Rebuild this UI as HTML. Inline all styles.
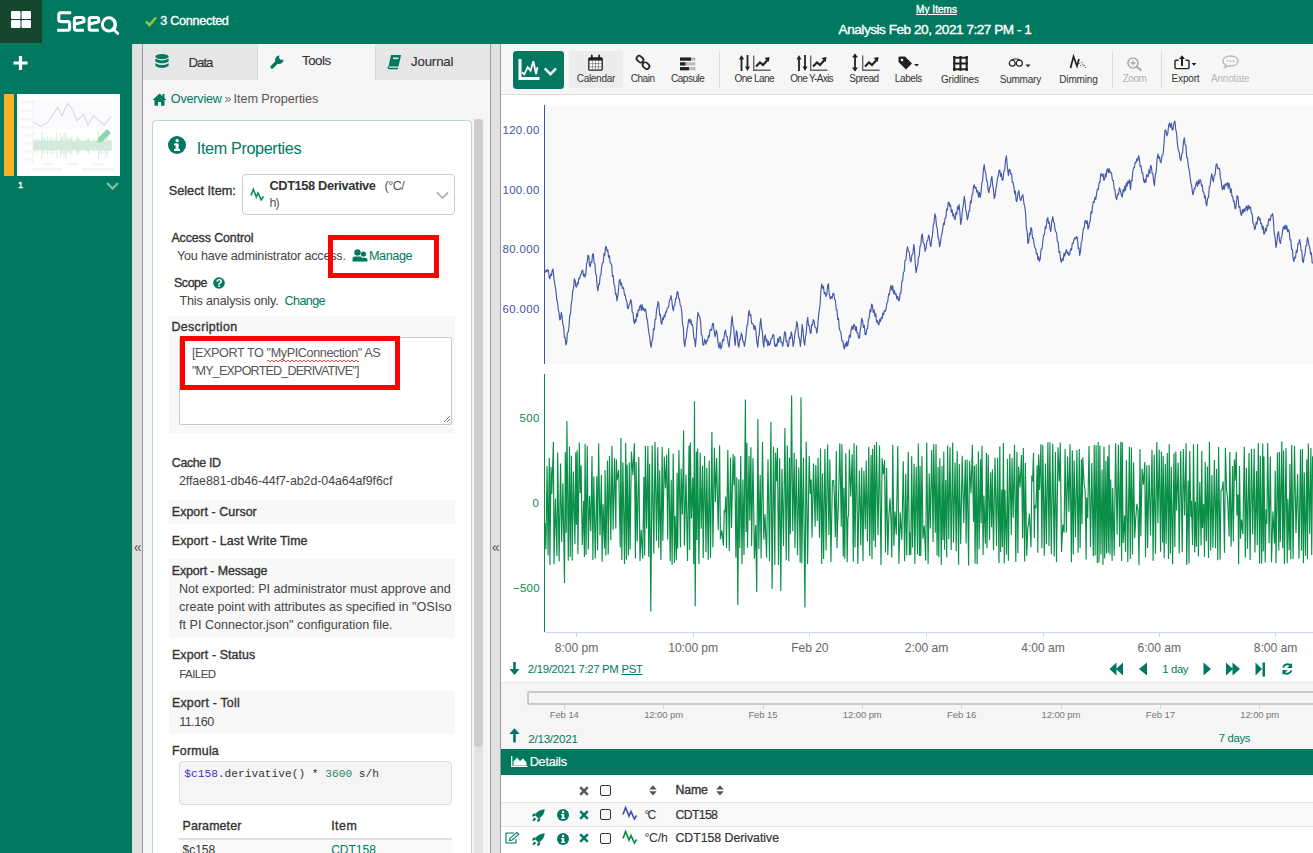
<!DOCTYPE html>
<html><head><meta charset="utf-8"><title>Seeq</title>
<style>
html,body{margin:0;padding:0;}
body{width:1313px;height:853px;overflow:hidden;position:relative;font-family:"Liberation Sans", sans-serif;background:#fff;}
svg{display:block;overflow:visible;}
</style></head><body>
<div style="position:absolute;left:0px;top:0px;width:1313px;height:44px;background:#007960;"></div>
<div style="position:absolute;left:0px;top:0px;width:42px;height:43px;background:#15472f;"></div>
<svg style="position:absolute;left:11px;top:11px;" width="21" height="18" viewBox="0 0 21 18"><rect x="0" y="0" width="9.5" height="8" rx="1" fill="#fff"/><rect x="10.5" y="0" width="9.5" height="8" rx="1" fill="#fff"/><rect x="0" y="9" width="9.5" height="8" rx="1" fill="#fff"/><rect x="10.5" y="9" width="9.5" height="8" rx="1" fill="#fff"/></svg>
<svg style="position:absolute;left:56px;top:10px;" width="66" height="26" viewBox="0 0 66 26"><g fill="none" stroke="#fff" stroke-width="3.1" stroke-linejoin="round"><path d="M15.2 2.8 H4.8 Q2.8 2.8 2.8 4.8 V9.6 Q2.8 11.6 4.8 11.6 H11.6 Q13.6 11.6 13.6 13.6 V18.2 Q13.6 20.2 11.6 20.2 H1.2"/><path d="M27.9 20.2 H20.4 Q18.4 20.2 18.4 18.2 V9.5 Q18.4 7.5 20.4 7.5 H25.9 Q27.9 7.5 27.9 9.5 V11.8 L18.6 14.3"/><path d="M42.7 20.2 H35.2 Q33.2 20.2 33.2 18.2 V9.5 Q33.2 7.5 35.2 7.5 H40.7 Q42.7 7.5 42.7 9.5 V11.8 L33.4 14.3"/></g><circle cx="53" cy="14.4" r="6.6" fill="none" stroke="#fff" stroke-width="3"/><path d="M57.5 19.2 L61.8 23.6" stroke="#fff" stroke-width="2.8" stroke-linecap="round"/><path d="M55.2 9.8 A5.2 5.2 0 0 1 55.2 19" fill="none" stroke="#fff" stroke-width="1"/></svg>
<svg style="position:absolute;left:145px;top:16px;" width="12" height="11" viewBox="0 0 12 11"><path d="M1 5.5 L4.5 9 L11 1.5" fill="none" stroke="#8cc63e" stroke-width="2.6"/></svg>
<div style="position:absolute;left:160.30px;top:15.23px;font-size:12.6px;line-height:12.6px;color:#fff;font-weight:normal;letter-spacing:-0.285px;white-space:nowrap;-webkit-text-stroke:0.35px #fff;">3 Connected</div>
<div style="position:absolute;left:916.00px;top:4.73px;font-size:10px;line-height:10px;color:#fff;font-weight:normal;letter-spacing:0.063px;white-space:nowrap;-webkit-text-stroke:0.35px #fff;text-decoration:underline;">My Items</div>
<div style="position:absolute;left:838.60px;top:22.99px;font-size:13.6px;line-height:13.6px;color:#fff;font-weight:normal;letter-spacing:-0.477px;white-space:nowrap;-webkit-text-stroke:0.35px #fff;">Analysis Feb 20, 2021 7:27 PM - 1</div>
<div style="position:absolute;left:0px;top:44px;width:132px;height:809px;background:#007960;"></div>
<svg style="position:absolute;left:13px;top:56px;" width="15" height="14" viewBox="0 0 15 14"><path d="M7.5 0 V14 M0.5 7 H14.5" stroke="#fff" stroke-width="3.2"/></svg>
<div style="position:absolute;left:0px;top:82px;width:132px;height:1px;background:#0c6d56;"></div>
<div style="position:absolute;left:4px;top:94px;width:10px;height:82px;background:#f8b22a;"></div>
<div style="position:absolute;left:17px;top:94px;width:103px;height:82px;background:#fff;"></div>
<svg style="position:absolute;left:17px;top:94px;" width="103" height="82" viewBox="0 0 103 82"><rect x="16" y="6" width="79" height="29" fill="#fbfbfd"/><path d="M16.8 28.2 L23.8 32.4 L30.8 28.2 L40.7 13.4 L44.9 21.9 L50.5 9.2 L56.1 16.2 L59.7 26.8 L66.7 20.5 L70.9 31.0 L76.5 21.9 L81.5 26.1 L87.1 31.0 L94.1 22.6" fill="none" stroke="#d3d6ea" stroke-width="1.1"/><rect x="16" y="46.5" width="79" height="10" fill="#d9ede2"/><path d="M16.5 47.1 V55.9M17.5 44.9 V58.1M18.2 48.4 V54.6M19.1 47.1 V55.9M20.1 43.5 V59.5M21.3 47.6 V55.4M22.6 45.4 V57.6M23.7 48.1 V54.9M24.9 38.2 V64.8M25.9 44.2 V58.8M27.1 43.0 V60.0M28.3 45.8 V57.2M29.7 47.9 V55.1M30.5 42.7 V60.3M31.7 46.7 V56.3M32.6 46.4 V56.6M33.7 43.1 V59.9M35.1 43.4 V59.6M36.3 47.5 V55.5M37.6 43.1 V59.9M38.8 47.2 V55.8M39.9 38.2 V64.8M41.3 48.0 V55.0M42.3 47.6 V55.4M43.5 39.4 V63.6M44.3 44.2 V58.8M45.6 42.6 V60.4M47.0 39.5 V63.5M47.7 47.3 V55.7M48.8 38.2 V64.8M49.8 42.7 V60.3M50.7 45.7 V57.3M51.9 44.9 V58.1M53.0 42.9 V60.1M54.0 44.2 V58.8M54.9 42.6 V60.4M56.0 48.4 V54.6M57.1 48.4 V54.6M58.3 48.1 V54.9M59.3 44.4 V58.6M60.5 42.2 V60.8M61.7 42.7 V60.3M62.7 44.9 V58.1M63.6 46.6 V56.4M64.7 46.7 V56.3M66.0 48.3 V54.7M67.2 46.6 V56.4M68.5 47.1 V55.9M69.5 44.3 V58.7M70.4 46.5 V56.5M71.4 43.4 V59.6M72.3 44.6 V58.4M73.3 47.1 V55.9M74.4 47.4 V55.6M75.7 47.4 V55.6M77.0 44.6 V58.4M77.9 47.7 V55.3M79.2 46.9 V56.1M80.2 46.0 V57.0M81.5 37.8 V65.2M82.8 42.6 V60.4M84.2 42.9 V60.1M85.4 43.5 V59.5M86.5 46.8 V56.2M87.3 48.1 V54.9M88.2 38.0 V65.0M89.4 43.0 V60.0M90.7 38.8 V64.2M91.6 46.7 V56.3M92.6 46.0 V57.0M93.8 46.5 V56.5" stroke="#cfe7da" stroke-width="0.8"/><path d="M16 37 V70 M16 6 V35" stroke="#ececf4" stroke-width="1"/><g fill="#f4f4f4"><rect x="4" y="7" width="10" height="2.5"/><rect x="4" y="15.5" width="10" height="2.5"/><rect x="4" y="24" width="10" height="2.5"/><rect x="4" y="32" width="10" height="2.5"/><rect x="7" y="40" width="7" height="2.5"/><rect x="7" y="48" width="7" height="2.5"/><rect x="7" y="56" width="7" height="2.5"/><rect x="7" y="64" width="7" height="2.5"/><rect x="26" y="69" width="10" height="2.5"/><rect x="50" y="69" width="11" height="2.5"/><rect x="76" y="69" width="11" height="2.5"/><rect x="15" y="74" width="30" height="2.5"/><rect x="65" y="74" width="32" height="2.5"/></g><path d="M81 44 L90 35 L94 39 L85 48 L80.5 48.5 Z" fill="#93d3b0"/></svg>
<div style="position:absolute;left:18.00px;top:180.91px;font-size:9.2px;line-height:9.2px;color:#fff;font-weight:normal;letter-spacing:0.480px;white-space:nowrap;-webkit-text-stroke:0.35px #fff;">1</div>
<svg style="position:absolute;left:106px;top:182px;" width="13" height="8" viewBox="0 0 13 8"><path d="M1 1 L6.5 6.5 L12 1" fill="none" stroke="#7fb9a6" stroke-width="2.4"/></svg>
<div style="position:absolute;left:132px;top:44px;width:1px;height:809px;background:#d6d6d6;"></div>
<div style="position:absolute;left:133px;top:44px;width:9px;height:809px;background:#e1e1e1;"></div>
<div style="position:absolute;left:142px;top:44px;width:1px;height:809px;background:#9a9a9a;"></div>
<div style="position:absolute;left:137.6px;transform:translateX(-50%);top:539.95px;font-size:14px;line-height:14px;color:#555;font-weight:normal;white-space:nowrap;">&#171;</div>
<div style="position:absolute;left:143px;top:44px;width:347px;height:809px;background:#f5f5f5;"></div>
<div style="position:absolute;left:143px;top:44px;width:115px;height:36px;background:#e6e6e6;border-top-right-radius:3px;border-right:1px solid #d6d6d6;box-sizing:border-box;"></div>
<div style="position:absolute;left:375px;top:44px;width:115px;height:36px;background:#e6e6e6;border-top-left-radius:3px;border-left:1px solid #d6d6d6;box-sizing:border-box;"></div>
<svg style="position:absolute;left:155px;top:54px;" width="14" height="15" viewBox="0 0 14 15"><g fill="#007960"><ellipse cx="7" cy="2.6" rx="6.6" ry="2.6"/><path d="M0.4 4.6 Q7 8.4 13.6 4.6 V7.4 Q7 11.2 0.4 7.4Z"/><path d="M0.4 9.2 Q7 13 13.6 9.2 V12 Q7 15.8 0.4 12Z"/></g></svg>
<div style="position:absolute;left:188.60px;top:55.53px;font-size:13.2px;line-height:13.2px;color:#333;font-weight:normal;letter-spacing:-0.997px;white-space:nowrap;-webkit-text-stroke:0.15px #333;">Data</div>
<svg style="position:absolute;left:270px;top:54px;" width="15" height="15" viewBox="0 0 15 15"><path d="M2 13 L8.5 6.5" stroke="#007960" stroke-width="3.2" stroke-linecap="round"/><path d="M9.5 1.5 A4.2 4.2 0 1 0 13.5 5.5 L11 6 L9 4 Z" fill="#007960"/></svg>
<div style="position:absolute;left:302.00px;top:54.33px;font-size:13.2px;line-height:13.2px;color:#333;font-weight:normal;letter-spacing:-0.430px;white-space:nowrap;-webkit-text-stroke:0.15px #333;">Tools</div>
<svg style="position:absolute;left:387px;top:54px;" width="15" height="15" viewBox="0 0 15 15"><path d="M4 1 H14 L11.5 12.5 H1.5 Z" fill="#007960"/><path d="M1.5 12.5 Q0.5 14.5 2.5 14.5 H11" fill="none" stroke="#007960" stroke-width="1.3"/><rect x="6" y="3.5" width="5.5" height="1.6" fill="#e6e6e6"/></svg>
<div style="position:absolute;left:411.00px;top:55.13px;font-size:13.2px;line-height:13.2px;color:#333;font-weight:normal;letter-spacing:-0.132px;white-space:nowrap;-webkit-text-stroke:0.15px #333;">Journal</div>
<svg style="position:absolute;left:152px;top:93px;" width="15" height="13" viewBox="0 0 15 13"><path d="M7.5 0.5 L0.5 7 H2.5 V12.8 H6 V9 H9 V12.8 H12.5 V7 H14.5 Z" fill="#007960"/><rect x="10.5" y="1" width="2" height="4" fill="#007960"/></svg>
<div style="position:absolute;left:170.80px;top:93.33px;font-size:12.6px;line-height:12.6px;color:#007960;font-weight:normal;letter-spacing:-0.193px;white-space:nowrap;">Overview</div>
<div style="position:absolute;left:224.60px;top:92.84px;font-size:12px;line-height:12px;color:#777;font-weight:normal;letter-spacing:-1.170px;white-space:nowrap;">»</div>
<div style="position:absolute;left:233.60px;top:93.13px;font-size:12.6px;line-height:12.6px;color:#555;font-weight:normal;letter-spacing:-0.045px;white-space:nowrap;">Item Properties</div>
<div style="position:absolute;left:152px;top:120px;width:320px;height:760px;background:#fff;border:1.3px solid #b5d8ce;border-radius:4px;box-sizing:border-box;"></div>
<div style="position:absolute;left:474px;top:119px;width:9px;height:734px;background:#e3e3e3;"></div>
<div style="position:absolute;left:474px;top:119px;width:9px;height:628px;background:#cdcdcd;border-radius:4.5px;"></div>
<svg style="position:absolute;left:168px;top:136px;" width="18" height="18" viewBox="0 0 18 18"><circle cx="9" cy="9" r="9" fill="#007960"/><rect x="7.6" y="7.5" width="3" height="6" fill="#fff"/><rect x="6" y="13" width="6" height="2" fill="#fff"/><rect x="6" y="7.5" width="3" height="1.8" fill="#fff"/><circle cx="9.2" cy="4.6" r="1.7" fill="#fff"/></svg>
<div style="position:absolute;left:196.80px;top:139.69px;font-size:16.2px;line-height:16.2px;color:#007960;font-weight:normal;letter-spacing:-0.360px;white-space:nowrap;">Item Properties</div>
<div style="position:absolute;left:168.70px;top:185.45px;font-size:12.7px;line-height:12.7px;color:#333;font-weight:normal;letter-spacing:0.014px;white-space:nowrap;-webkit-text-stroke:0.35px #333;">Select Item:</div>
<div style="position:absolute;left:242px;top:174px;width:213px;height:41px;background:#fff;border:1px solid #ccc;border-radius:4px;box-sizing:border-box;"></div>
<svg style="position:absolute;left:250px;top:188px;" width="15" height="13" viewBox="0 0 15 13"><path d="M1 7.5 L3.3 1.2 L6.3 9 L8 5 L11.2 11.8 L13.5 8.5" fill="none" stroke="#0a8f5a" stroke-width="1.6"/></svg>
<div style="position:absolute;left:269.40px;top:179.86px;font-size:12.8px;line-height:12.8px;color:#333;font-weight:bold;letter-spacing:-0.363px;white-space:nowrap;">CDT158 Derivative</div>
<div style="position:absolute;left:384.50px;top:180.03px;font-size:12.6px;line-height:12.6px;color:#555;font-weight:normal;letter-spacing:-0.547px;white-space:nowrap;">(°C/</div>
<div style="position:absolute;left:269.40px;top:197.33px;font-size:12.6px;line-height:12.6px;color:#555;font-weight:normal;letter-spacing:-0.900px;white-space:nowrap;">h)</div>
<svg style="position:absolute;left:436px;top:191px;" width="13" height="9" viewBox="0 0 13 9"><path d="M1 1.5 L6.5 7 L12 1.5" fill="none" stroke="#b5b5b5" stroke-width="1.8"/></svg>
<div style="position:absolute;left:171.40px;top:231.60px;font-size:12.4px;line-height:12.4px;color:#333;font-weight:normal;letter-spacing:-0.084px;white-space:nowrap;-webkit-text-stroke:0.35px #333;">Access Control</div>
<div style="position:absolute;left:177.00px;top:250.23px;font-size:12.6px;line-height:12.6px;color:#444;font-weight:normal;letter-spacing:-0.194px;white-space:nowrap;">You have administrator access.</div>
<svg style="position:absolute;left:352px;top:249px;" width="16" height="13" viewBox="0 0 16 13"><circle cx="5.5" cy="3.5" r="3.2" fill="#007960"/><path d="M0.5 12.5 V10 Q0.5 7.5 3 7.5 H8 Q10.5 7.5 10.5 10 V12.5Z" fill="#007960"/><circle cx="11.5" cy="5" r="2.6" fill="#007960"/><path d="M9 12.5 V10.5 Q9 8.8 11 8.8 H13 Q15.5 8.8 15.5 10.8 V12.5Z" fill="#007960"/></svg>
<div style="position:absolute;left:369.00px;top:250.33px;font-size:12.6px;line-height:12.6px;color:#007960;font-weight:normal;letter-spacing:-0.406px;white-space:nowrap;">Manage</div>
<div style="position:absolute;left:174.00px;top:276.50px;font-size:12.4px;line-height:12.4px;color:#333;font-weight:normal;letter-spacing:-0.415px;white-space:nowrap;-webkit-text-stroke:0.35px #333;">Scope</div>
<svg style="position:absolute;left:213px;top:277px;" width="12" height="12" viewBox="0 0 12 12"><circle cx="6" cy="6" r="5.8" fill="#007960"/><text x="6" y="10" font-size="11" font-weight="bold" text-anchor="middle" fill="#fff" font-family="Liberation Sans">?</text></svg>
<div style="position:absolute;left:179.40px;top:294.73px;font-size:12.6px;line-height:12.6px;color:#444;font-weight:normal;letter-spacing:-0.145px;white-space:nowrap;">This analysis only.</div>
<div style="position:absolute;left:284.50px;top:294.73px;font-size:12.6px;line-height:12.6px;color:#007960;font-weight:normal;letter-spacing:-0.608px;white-space:nowrap;">Change</div>
<div style="position:absolute;left:169px;top:316px;width:286px;height:117px;background:#f8f8f8;"></div>
<div style="position:absolute;left:171.40px;top:321.20px;font-size:12.4px;line-height:12.4px;color:#333;font-weight:normal;letter-spacing:0.378px;white-space:nowrap;-webkit-text-stroke:0.35px #333;">Description</div>
<div style="position:absolute;left:179px;top:337px;width:273px;height:88px;background:#fff;border:1px solid #c8c8c8;border-radius:2px;box-sizing:border-box;"></div>
<div style="position:absolute;left:191.90px;top:347.33px;font-size:12.6px;line-height:12.6px;color:#555;font-weight:normal;letter-spacing:-0.379px;white-space:nowrap;">[EXPORT TO &quot;MyPIConnection&quot; AS</div>
<div style="position:absolute;left:191.90px;top:365.43px;font-size:12.6px;line-height:12.6px;color:#555;font-weight:normal;letter-spacing:-0.829px;white-space:nowrap;">&quot;MY_EXPORTED_DERIVATIVE&quot;]</div>
<svg style="position:absolute;left:267px;top:359px;" width="92" height="4" viewBox="0 0 92 4"><path d="M0 2 Q1 0 2 2 T4 2 T6 2 T8 2 T10 2 T12 2 T14 2 T16 2 T18 2 T20 2 T22 2 T24 2 T26 2 T28 2 T30 2 T32 2 T34 2 T36 2 T38 2 T40 2 T42 2 T44 2 T46 2 T48 2 T50 2 T52 2 T54 2 T56 2 T58 2 T60 2 T62 2 T64 2 T66 2 T68 2 T70 2 T72 2 T74 2 T76 2 T78 2 T80 2 T82 2 T84 2 T86 2 T88 2 T90 2 T92 2" fill="none" stroke="#e33" stroke-width="0.9"/></svg>
<svg style="position:absolute;left:442px;top:414px;" width="9" height="9" viewBox="0 0 9 9"><path d="M8 2 L2 8 M8 5 L5 8" stroke="#777" stroke-width="1"/></svg>
<div style="position:absolute;left:328px;top:234.5px;width:111px;height:43.3px;background:transparent;border:5px solid #f00;box-sizing:border-box;"></div>
<div style="position:absolute;left:180px;top:336px;width:220px;height:54px;background:transparent;border:5px solid #f00;box-sizing:border-box;"></div>
<div style="position:absolute;left:171.80px;top:457.20px;font-size:12.4px;line-height:12.4px;color:#333;font-weight:normal;letter-spacing:-0.356px;white-space:nowrap;-webkit-text-stroke:0.35px #333;">Cache ID</div>
<div style="position:absolute;left:178.90px;top:475.40px;font-size:12.4px;line-height:12.4px;color:#444;font-weight:normal;letter-spacing:-0.054px;white-space:nowrap;">2ffae881-db46-44f7-ab2d-04a64af9f6cf</div>
<div style="position:absolute;left:169px;top:500px;width:286px;height:24px;background:#f8f8f8;"></div>
<div style="position:absolute;left:171.80px;top:505.60px;font-size:12.4px;line-height:12.4px;color:#333;font-weight:normal;letter-spacing:0.067px;white-space:nowrap;-webkit-text-stroke:0.35px #333;">Export - Cursor</div>
<div style="position:absolute;left:171.80px;top:535.10px;font-size:12.4px;line-height:12.4px;color:#333;font-weight:normal;letter-spacing:0.132px;white-space:nowrap;-webkit-text-stroke:0.35px #333;">Export - Last Write Time</div>
<div style="position:absolute;left:169px;top:559px;width:286px;height:79px;background:#f8f8f8;"></div>
<div style="position:absolute;left:171.80px;top:564.60px;font-size:12.4px;line-height:12.4px;color:#333;font-weight:normal;letter-spacing:-0.105px;white-space:nowrap;-webkit-text-stroke:0.35px #333;">Export - Message</div>
<div style="position:absolute;left:179.00px;top:582.63px;font-size:12.6px;line-height:12.6px;color:#444;font-weight:normal;letter-spacing:0.006px;white-space:nowrap;">Not exported: PI administrator must approve and</div>
<div style="position:absolute;left:179.00px;top:601.03px;font-size:12.6px;line-height:12.6px;color:#444;font-weight:normal;letter-spacing:-0.016px;white-space:nowrap;">create point with attributes as specified in &quot;OSIso</div>
<div style="position:absolute;left:179.00px;top:619.33px;font-size:12.6px;line-height:12.6px;color:#444;font-weight:normal;letter-spacing:0.010px;white-space:nowrap;">ft PI Connector.json&quot; configuration file.</div>
<div style="position:absolute;left:172.00px;top:649.30px;font-size:12.4px;line-height:12.4px;color:#333;font-weight:normal;letter-spacing:0.092px;white-space:nowrap;-webkit-text-stroke:0.35px #333;">Export - Status</div>
<div style="position:absolute;left:179.20px;top:668.08px;font-size:11.6px;line-height:11.6px;color:#444;font-weight:normal;letter-spacing:-0.594px;white-space:nowrap;">FAILED</div>
<div style="position:absolute;left:169px;top:691px;width:286px;height:43px;background:#f8f8f8;"></div>
<div style="position:absolute;left:172.00px;top:697.30px;font-size:12.4px;line-height:12.4px;color:#333;font-weight:normal;letter-spacing:0.205px;white-space:nowrap;-webkit-text-stroke:0.35px #333;">Export - Toll</div>
<div style="position:absolute;left:179.20px;top:715.53px;font-size:12.6px;line-height:12.6px;color:#444;font-weight:normal;letter-spacing:-0.480px;white-space:nowrap;">11.160</div>
<div style="position:absolute;left:172.00px;top:745.10px;font-size:12.4px;line-height:12.4px;color:#333;font-weight:normal;letter-spacing:0.220px;white-space:nowrap;-webkit-text-stroke:0.35px #333;">Formula</div>
<div style="position:absolute;left:179px;top:761px;width:273px;height:44px;background:#f5f5f5;border:1px solid #ddd;border-radius:4px;box-sizing:border-box;"></div>
<div style="position:absolute;left:184.3px;top:768.77px;font-family:'Liberation Mono',monospace;font-size:11.2px;line-height:11.2px;white-space:nowrap;color:#333;"><span style="color:#3a30c9">$c158</span>.derivative() * <span style="color:#26866a">3600</span> s/h</div>
<div style="position:absolute;left:182.50px;top:820.00px;font-size:12.4px;line-height:12.4px;color:#333;font-weight:normal;letter-spacing:0.114px;white-space:nowrap;-webkit-text-stroke:0.35px #333;">Parameter</div>
<div style="position:absolute;left:331.20px;top:820.00px;font-size:12.4px;line-height:12.4px;color:#333;font-weight:normal;letter-spacing:0.493px;white-space:nowrap;-webkit-text-stroke:0.35px #333;">Item</div>
<div style="position:absolute;left:179px;top:838px;width:273px;height:2px;background:#dde;"></div>
<div style="position:absolute;left:179px;top:840px;width:273px;height:13px;background:#f9f9f9;"></div>
<div style="position:absolute;left:182.5px;top:844.34px;font-size:12px;line-height:12px;color:#333;font-weight:normal;white-space:nowrap;">$c158</div>
<div style="position:absolute;left:331.2px;top:844.34px;font-size:12px;line-height:12px;color:#007960;font-weight:normal;white-space:nowrap;">CDT158</div>
<div style="position:absolute;left:490px;top:44px;width:1px;height:809px;background:#9a9a9a;"></div>
<div style="position:absolute;left:491px;top:44px;width:9px;height:809px;background:#e1e1e1;"></div>
<div style="position:absolute;left:500px;top:44px;width:1px;height:809px;background:#9a9a9a;"></div>
<div style="position:absolute;left:495.6px;transform:translateX(-50%);top:539.95px;font-size:14px;line-height:14px;color:#555;font-weight:normal;white-space:nowrap;">&#171;</div>
<div style="position:absolute;left:501px;top:44px;width:812px;height:809px;background:#fff;"></div>
<div style="position:absolute;left:501px;top:44px;width:812px;height:50px;background:#f6f6f6;"></div>
<div style="position:absolute;left:501px;top:94px;width:812px;height:1px;background:#dddddd;"></div>
<div style="position:absolute;left:512px;top:50px;width:53px;height:40px;background:#007960;border-radius:4px;border:1px solid #fff;box-sizing:border-box;"></div>
<svg style="position:absolute;left:517px;top:57px;" width="42" height="25" viewBox="0 0 42 25"><path d="M3 2 V21.5 H22.5" fill="none" stroke="#fff" stroke-width="3"/><path d="M5 15.3 L7.3 17.3 L10.7 10.1 L13.5 13.7 L16.4 4.2 L19 17 L20.5 10.1" fill="none" stroke="#fff" stroke-width="1.8" stroke-linejoin="miter"/><path d="M27.7 11.4 L33.4 17.1 L39.1 11.4" fill="none" stroke="#eee" stroke-width="2.6"/></svg>
<div style="position:absolute;left:569px;top:51px;width:54px;height:37px;background:#ececec;border-radius:3px;"></div>
<svg style="position:absolute;left:588px;top:55px;" width="15" height="16" viewBox="0 0 15 16"><rect x="0.8" y="2.8" width="13.4" height="12.4" rx="1.2" fill="#fff" stroke="#222" stroke-width="1.3"/><rect x="0.8" y="2.8" width="13.4" height="2.8" fill="#222"/><path d="M3.8 0.3 V4.5 M11.2 0.3 V4.5" stroke="#222" stroke-width="1.8" stroke-linecap="round"/><path d="M4.6 5.5 V15 M7.5 5.5 V15 M10.4 5.5 V15 M1 8.6 H14 M1 11.8 H14" stroke="#777" stroke-width="0.7"/></svg>
<div style="position:absolute;left:576.70px;top:74.03px;font-size:10px;line-height:10px;color:#333;font-weight:normal;letter-spacing:-0.283px;white-space:nowrap;">Calendar</div>
<svg style="position:absolute;left:635px;top:55px;" width="16" height="15" viewBox="0 0 16 15"><g fill="none" stroke="#222" stroke-width="1.7"><rect x="1.3" y="1.6" width="7.4" height="5.2" rx="2.6" transform="rotate(42 5 4.2)"/><rect x="7.3" y="8" width="7.4" height="5.2" rx="2.6" transform="rotate(42 11 10.6)"/></g></svg>
<div style="position:absolute;left:630.70px;top:74.03px;font-size:10px;line-height:10px;color:#333;font-weight:normal;letter-spacing:-0.458px;white-space:nowrap;">Chain</div>
<svg style="position:absolute;left:680px;top:57px;" width="16" height="14" viewBox="0 0 16 14"><rect x="0" y="0.5" width="15.5" height="3.2" rx="0.6" fill="#bbb"/><rect x="0" y="5.3" width="15.5" height="3.2" rx="0.6" fill="#bbb"/><rect x="0" y="10.1" width="15.5" height="3.2" rx="0.6" fill="#bbb"/><rect x="0" y="0.5" width="11" height="3.2" fill="#222"/><rect x="0" y="5.3" width="5.5" height="3.2" fill="#222"/><rect x="0" y="10.1" width="9" height="3.2" fill="#222"/></svg>
<div style="position:absolute;left:671.00px;top:74.03px;font-size:10px;line-height:10px;color:#333;font-weight:normal;letter-spacing:-0.482px;white-space:nowrap;">Capsule</div>
<div style="position:absolute;left:719px;top:51px;width:1px;height:37px;background:#dddddd;"></div>
<svg style="position:absolute;left:738px;top:54px;" width="34" height="18" viewBox="0 0 34 18"><path d="M3.5 4 V17" stroke="#222" stroke-width="1.8"/><path d="M1 5.5 L3.5 1 L6 5.5Z" fill="#222"/><path d="M9.5 1 V13.5" stroke="#222" stroke-width="1.8"/><path d="M7 12.5 L9.5 17 L12 12.5Z" fill="#222"/><path d="M15.7 1.5 V16.2 H32.5" fill="none" stroke="#666" stroke-width="1.4"/><path d="M18 12.5 L22 8.5 L25 11.0 L29.5 6.0" fill="none" stroke="#222" stroke-width="2.1"/><path d="M26.5 4.0 L31.5 3.0 L30.8 8.0Z" fill="#222"/></svg>
<div style="position:absolute;left:734.50px;top:74.03px;font-size:10px;line-height:10px;color:#333;font-weight:normal;letter-spacing:-0.561px;white-space:nowrap;">One Lane</div>
<svg style="position:absolute;left:796px;top:54px;" width="34" height="18" viewBox="0 0 34 18"><path d="M3.0 4 V17" stroke="#222" stroke-width="1.8"/><path d="M0.5 5.5 L3.0 1 L5.5 5.5Z" fill="#222"/><path d="M9.0 1 V13.5" stroke="#222" stroke-width="1.8"/><path d="M6.5 12.5 L9.0 17 L11.5 12.5Z" fill="#222"/><path d="M14.7 1.5 V16.2 H31.5" fill="none" stroke="#666" stroke-width="1.4"/><path d="M17 12.5 L21 8.5 L24 11.0 L28.5 6.0" fill="none" stroke="#222" stroke-width="2.1"/><path d="M25.5 4.0 L30.5 3.0 L29.8 8.0Z" fill="#222"/></svg>
<div style="position:absolute;left:790.20px;top:74.03px;font-size:10px;line-height:10px;color:#333;font-weight:normal;letter-spacing:-0.686px;white-space:nowrap;">One Y-Axis</div>
<svg style="position:absolute;left:851px;top:53px;" width="30" height="19" viewBox="0 0 30 19"><path d="M4 1.5 V17.5" stroke="#222" stroke-width="1.8"/><path d="M1 4.5 L4 0.5 L7 4.5Z M1 14.5 L4 18.5 L7 14.5Z" fill="#222"/><path d="M11.7 2.5 V17.2 H28.5" fill="none" stroke="#666" stroke-width="1.4"/><path d="M14 13.5 L18 9.5 L21 12.0 L25.5 7.0" fill="none" stroke="#222" stroke-width="2.1"/><path d="M22.5 5.0 L27.5 4.0 L26.8 9.0Z" fill="#222"/></svg>
<div style="position:absolute;left:849.30px;top:74.03px;font-size:10px;line-height:10px;color:#333;font-weight:normal;letter-spacing:-0.510px;white-space:nowrap;">Spread</div>
<svg style="position:absolute;left:898px;top:56px;" width="23" height="14" viewBox="0 0 23 14"><path d="M0.5 1.5 Q0.5 0.5 1.5 0.5 H7 L14 7.5 L8 13.5 L0.5 6 Z" fill="#222"/><circle cx="4" cy="4" r="1.3" fill="#f6f6f6"/><path d="M16 8 H21 L18.5 10.5Z" fill="#222"/></svg>
<div style="position:absolute;left:894.80px;top:74.03px;font-size:10px;line-height:10px;color:#333;font-weight:normal;letter-spacing:-0.394px;white-space:nowrap;">Labels</div>
<svg style="position:absolute;left:953px;top:56px;" width="15" height="15" viewBox="0 0 15 15"><path d="M1.3 0 V15 M7.5 0 V15 M13.7 0 V15 M0 1.8 H15 M0 7.5 H15 M0 13.2 H15" stroke="#222" stroke-width="2.1"/></svg>
<div style="position:absolute;left:940.90px;top:74.53px;font-size:10px;line-height:10px;color:#333;font-weight:normal;letter-spacing:-0.170px;white-space:nowrap;">Gridlines</div>
<svg style="position:absolute;left:1008px;top:58px;" width="24" height="10" viewBox="0 0 24 10"><circle cx="4.3" cy="5.2" r="3" fill="none" stroke="#222" stroke-width="1.2"/><circle cx="11.3" cy="5.2" r="3" fill="none" stroke="#222" stroke-width="1.2"/><path d="M3.5 2.2 L6 1 H9.5 L12 2.2" fill="none" stroke="#222" stroke-width="1.1"/><path d="M17.5 6.5 H22.5 L20 9.2Z" fill="#222"/></svg>
<div style="position:absolute;left:999.70px;top:74.53px;font-size:10px;line-height:10px;color:#333;font-weight:normal;letter-spacing:-0.213px;white-space:nowrap;">Summary</div>
<svg style="position:absolute;left:1069px;top:55px;" width="18" height="15" viewBox="0 0 18 15"><path d="M1.5 13 L4.5 1.5 L8 11 L10 4" fill="none" stroke="#222" stroke-width="1.7"/><path d="M10.5 8 L12 12 M13 7 L14.5 11.5 M15 10 L16.5 13" stroke="#555" stroke-width="1" stroke-dasharray="1.2 1"/></svg>
<div style="position:absolute;left:1059.30px;top:74.53px;font-size:10px;line-height:10px;color:#333;font-weight:normal;letter-spacing:-0.158px;white-space:nowrap;">Dimming</div>
<div style="position:absolute;left:1112px;top:51px;width:1px;height:37px;background:#dddddd;"></div>
<svg style="position:absolute;left:1127px;top:57px;" width="16" height="14" viewBox="0 0 16 14"><circle cx="6" cy="6" r="5" fill="none" stroke="#aaa" stroke-width="1.6"/><path d="M6 3.5 V8.5 M3.5 6 H8.5" stroke="#aaa" stroke-width="1.3"/><path d="M9.6 9.6 L14.5 13.5" stroke="#aaa" stroke-width="2.2"/></svg>
<div style="position:absolute;left:1122.70px;top:74.03px;font-size:10px;line-height:10px;color:#b0b0b0;font-weight:normal;letter-spacing:-0.487px;white-space:nowrap;">Zoom</div>
<div style="position:absolute;left:1161px;top:51px;width:1px;height:37px;background:#dddddd;"></div>
<svg style="position:absolute;left:1174px;top:55px;" width="24" height="14" viewBox="0 0 24 14"><path d="M4.5 5.2 H2 Q1 5.2 1 6.2 V12.6 Q1 13.6 2 13.6 H14 Q15 13.6 15 12.6 V6.2 Q15 5.2 14 5.2 H11.5" fill="none" stroke="#222" stroke-width="1.4"/><path d="M8 11 V2" stroke="#222" stroke-width="2"/><path d="M5 4 L8 0.3 L11 4Z" fill="#222"/><path d="M17.5 8 H22.5 L20 10.7Z" fill="#222"/></svg>
<div style="position:absolute;left:1171.60px;top:74.03px;font-size:10px;line-height:10px;color:#333;font-weight:normal;letter-spacing:-0.180px;white-space:nowrap;">Export</div>
<svg style="position:absolute;left:1222px;top:55px;" width="17" height="13" viewBox="0 0 17 13"><path d="M8.5 1 C3.5 1 1 3.5 1 6 C1 7.8 2.3 9.2 4 10 L2.5 12.5 L6.5 10.8 C7.2 11 7.8 11 8.5 11 C13.5 11 16 8.5 16 6 C16 3.5 13.5 1 8.5 1Z" fill="none" stroke="#b8b8b8" stroke-width="1.3"/><circle cx="5.5" cy="6" r="0.9" fill="#b8b8b8"/><circle cx="8.5" cy="6" r="0.9" fill="#b8b8b8"/><circle cx="11.5" cy="6" r="0.9" fill="#b8b8b8"/></svg>
<div style="position:absolute;left:1211.00px;top:74.03px;font-size:10px;line-height:10px;color:#b8b8b8;font-weight:normal;letter-spacing:-0.204px;white-space:nowrap;">Annotate</div>
<div style="position:absolute;left:545px;top:106px;width:768px;height:258px;background:#f9f9f9;"></div>
<div style="position:absolute;left:544px;top:105px;width:1.3px;height:259px;background:#4055a3;"></div>
<div style="position:absolute;left:502.40px;top:124.95px;font-size:11.4px;line-height:11.4px;color:#4055a3;font-weight:normal;letter-spacing:0.406px;white-space:nowrap;">120.00</div>
<div style="position:absolute;left:502.40px;top:184.55px;font-size:11.4px;line-height:11.4px;color:#4055a3;font-weight:normal;letter-spacing:0.406px;white-space:nowrap;">100.00</div>
<div style="position:absolute;left:502.40px;top:243.95px;font-size:11.4px;line-height:11.4px;color:#4055a3;font-weight:normal;letter-spacing:0.406px;white-space:nowrap;">80.000</div>
<div style="position:absolute;left:502.40px;top:303.55px;font-size:11.4px;line-height:11.4px;color:#4055a3;font-weight:normal;letter-spacing:0.406px;white-space:nowrap;">60.000</div>
<div style="position:absolute;left:544px;top:374px;width:1.3px;height:258px;background:#068c45;"></div>
<div style="position:absolute;left:519.60px;top:412.65px;font-size:11.4px;line-height:11.4px;color:#068c45;font-weight:normal;letter-spacing:0.340px;white-space:nowrap;">500</div>
<div style="position:absolute;left:532.60px;top:498.15px;font-size:11.4px;line-height:11.4px;color:#068c45;font-weight:normal;letter-spacing:0.660px;white-space:nowrap;">0</div>
<div style="position:absolute;left:513.00px;top:582.95px;font-size:11.4px;line-height:11.4px;color:#068c45;font-weight:normal;letter-spacing:0.273px;white-space:nowrap;">−500</div>
<svg style="position:absolute;left:0;top:0" width="1313" height="853" viewBox="0 0 1313 853"><defs><clipPath id="c1"><rect x="545" y="100" width="768" height="540"/></clipPath></defs><g clip-path="url(#c1)"><path d="M545.3 272.7 L546.1 270.0 L546.8 271.8 L547.6 269.6 L548.4 270.2 L549.1 276.7 L549.9 278.8 L550.7 274.1 L551.5 275.6 L552.2 270.4 L553.0 268.9 L554.1 279.8 L555.2 286.4 L556.0 291.1 L556.7 299.5 L557.5 302.2 L558.3 309.8 L559.0 312.4 L559.8 319.9 L560.5 319.0 L561.3 312.3 L562.1 316.6 L562.8 324.6 L563.6 326.2 L564.4 337.4 L565.1 337.2 L565.9 345.0 L566.7 342.5 L567.4 333.1 L568.2 332.1 L569.0 326.4 L569.7 315.7 L570.5 313.7 L571.2 304.3 L572.0 299.9 L572.8 290.5 L573.5 288.4 L574.3 278.8 L575.1 280.3 L575.8 286.6 L576.6 287.1 L577.4 282.4 L578.1 284.3 L578.9 278.0 L579.6 278.9 L580.4 274.7 L581.1 274.7 L581.9 271.1 L582.7 270.1 L583.5 276.1 L584.2 274.1 L585.0 277.2 L585.8 274.0 L586.5 264.2 L587.2 262.2 L588.0 255.1 L588.8 256.1 L589.5 265.4 L590.3 266.6 L591.0 261.9 L591.8 262.4 L592.5 254.7 L593.3 253.6 L594.1 262.9 L594.8 263.4 L595.6 273.8 L596.4 275.2 L597.1 285.9 L597.9 291.0 L598.7 284.4 L599.4 284.4 L600.2 275.7 L601.0 274.3 L601.7 266.6 L602.5 262.8 L603.3 262.1 L604.0 253.6 L604.8 255.5 L605.5 246.9 L606.3 246.8 L607.1 251.2 L607.8 249.8 L608.6 257.5 L609.4 255.6 L610.1 262.7 L610.9 263.5 L611.7 265.2 L612.4 276.1 L613.2 275.5 L614.0 284.7 L614.7 285.9 L615.5 294.2 L616.2 293.7 L617.0 300.9 L618.1 294.3 L619.2 281.0 L620.0 279.3 L620.7 285.0 L621.5 282.9 L622.2 288.4 L623.0 287.1 L623.8 289.3 L624.5 295.2 L625.3 295.0 L626.1 300.4 L626.9 301.4 L627.6 308.2 L628.4 308.5 L629.2 304.3 L629.9 303.8 L630.7 299.3 L631.5 302.4 L632.2 312.1 L633.0 312.9 L633.7 320.8 L634.5 323.7 L635.3 319.0 L636.0 321.8 L636.8 313.3 L637.5 316.7 L638.3 309.7 L639.0 310.6 L639.8 306.2 L640.6 305.0 L641.3 310.4 L642.1 304.6 L642.8 309.7 L643.6 307.8 L644.4 311.1 L645.1 308.8 L645.9 310.8 L646.7 318.4 L647.4 319.6 L648.2 327.5 L649.0 333.9 L649.7 336.6 L650.5 344.2 L651.2 347.3 L652.0 340.5 L652.7 339.4 L653.5 328.8 L654.3 329.6 L655.0 319.8 L655.8 319.2 L656.6 309.2 L657.3 307.6 L658.1 301.6 L658.9 303.8 L659.6 315.1 L660.4 314.6 L661.1 323.0 L661.9 324.2 L662.6 317.8 L663.4 319.7 L664.2 315.1 L664.9 316.9 L665.7 311.8 L666.5 312.1 L667.2 308.1 L668.0 307.7 L668.8 305.9 L669.5 299.9 L670.2 299.5 L671.0 295.5 L671.8 299.8 L672.5 306.9 L673.3 310.8 L674.1 305.9 L674.8 304.9 L675.6 298.5 L676.3 298.6 L677.1 291.7 L677.9 292.2 L678.7 298.7 L679.4 298.9 L680.2 305.0 L681.0 306.2 L681.8 312.5 L682.5 323.5 L683.3 327.4 L684.0 341.9 L684.8 346.6 L685.6 339.2 L686.3 338.0 L687.1 329.6 L687.8 326.3 L688.6 319.9 L689.4 319.1 L690.1 323.2 L690.9 319.7 L691.6 324.8 L692.4 324.5 L693.1 329.2 L693.9 338.8 L694.6 338.9 L695.4 346.6 L696.3 336.4 L697.1 321.6 L698.0 312.4 L699.0 315.7 L699.9 317.3 L700.6 322.1 L701.4 334.6 L702.1 335.3 L702.9 345.3 L703.8 344.9 L704.7 339.2 L706.0 344.1 L706.8 340.2 L707.6 341.0 L708.4 335.6 L709.2 337.2 L710.0 329.7 L710.8 329.5 L711.6 330.3 L712.5 323.8 L713.3 323.4 L714.2 331.5 L715.1 336.8 L716.3 330.1 L717.2 334.2 L718.2 344.1 L719.1 348.1 L720.0 342.3 L720.9 348.8 L721.8 346.5 L722.7 339.5 L723.6 341.0 L724.6 332.8 L725.5 330.1 L726.4 336.5 L727.3 336.9 L728.2 343.7 L729.1 347.1 L729.9 338.5 L730.7 333.1 L731.4 322.4 L732.2 316.1 L733.0 326.0 L733.7 327.4 L734.5 340.0 L735.2 345.3 L736.4 330.7 L737.2 332.9 L738.1 345.0 L738.9 347.1 L739.7 339.2 L740.5 339.5 L741.3 333.1 L742.1 335.1 L742.8 341.2 L743.6 341.8 L744.4 346.5 L745.3 341.1 L746.2 333.1 L747.0 325.1 L747.7 325.0 L748.5 313.2 L749.2 310.6 L750.0 315.8 L750.8 314.5 L751.5 323.1 L752.3 323.4 L753.2 324.2 L754.1 329.6 L755.0 325.7 L755.9 330.7 L756.8 341.7 L757.8 347.1 L758.5 337.2 L759.3 334.8 L760.0 324.4 L760.8 318.5 L761.6 328.5 L762.3 331.1 L763.1 342.8 L763.9 347.1 L764.5 336.8 L765.3 334.9 L766.1 341.5 L766.9 339.2 L767.7 345.7 L768.5 341.2 L769.3 345.3 L770.2 343.8 L771.1 338.7 L772.1 338.2 L773.0 334.3 L773.8 335.2 L774.6 345.3 L775.4 346.5 L776.2 343.7 L777.0 346.2 L777.8 338.3 L778.7 342.5 L779.5 336.7 L780.3 336.8 L781.1 342.3 L781.9 342.1 L782.7 346.5 L783.7 340.0 L784.6 331.9 L785.4 332.2 L786.1 341.7 L786.9 340.7 L787.6 346.5 L788.5 346.1 L789.5 337.3 L790.4 338.6 L791.3 331.9 L792.2 336.3 L793.1 346.5 L794.0 341.6 L795.0 332.5 L795.9 329.3 L796.8 321.5 L797.7 326.3 L798.6 336.3 L799.5 338.8 L800.4 346.5 L801.3 337.4 L802.2 324.6 L803.0 330.4 L803.9 341.6 L804.7 345.3 L805.5 336.6 L806.2 333.3 L807.0 322.0 L807.7 317.3 L808.5 325.7 L809.4 325.9 L810.2 333.1 L811.0 332.9 L811.7 324.3 L812.5 325.2 L813.2 319.7 L814.1 320.9 L815.0 327.2 L816.0 327.8 L816.9 333.1 L817.7 326.7 L818.5 316.9 L819.3 310.0 L820.1 304.1 L820.9 291.3 L821.7 283.8 L822.6 288.4 L823.4 286.2 L824.3 293.7 L825.1 292.4 L826.0 296.6 L826.8 294.5 L827.6 285.8 L828.4 283.8 L829.3 294.2 L830.3 299.0 L831.2 296.5 L832.1 298.5 L833.0 293.4 L833.9 293.5 L834.7 299.7 L835.4 300.0 L836.2 309.6 L837.0 309.8 L837.7 319.5 L838.5 318.2 L839.2 328.0 L840.0 330.7 L840.9 332.4 L841.9 341.0 L842.8 340.9 L843.7 347.1 L844.5 348.8 L845.3 343.3 L846.1 346.5 L846.9 341.4 L847.7 345.8 L848.5 341.6 L849.3 335.3 L850.2 337.4 L851.0 330.7 L851.9 326.1 L852.9 329.5 L853.8 324.4 L854.7 325.3 L855.5 330.7 L856.3 326.6 L857.0 332.9 L857.8 332.8 L858.6 338.0 L859.4 338.2 L860.2 330.6 L860.9 326.4 L861.7 318.3 L862.6 320.6 L863.4 327.4 L864.3 325.3 L865.1 334.6 L866.0 334.7 L866.8 329.1 L867.6 328.6 L868.4 319.1 L869.2 318.4 L870.0 309.8 L870.8 311.9 L871.6 304.2 L872.4 305.3 L873.2 312.5 L874.1 309.9 L874.9 316.3 L875.7 313.3 L876.6 322.2 L877.4 320.5 L878.2 324.2 L879.0 324.7 L879.8 319.2 L880.5 321.6 L881.3 317.2 L882.1 318.7 L882.9 312.9 L883.6 315.0 L884.4 310.5 L885.2 311.3 L886.0 309.6 L886.9 303.1 L887.7 301.9 L888.6 294.1 L889.4 295.0 L890.3 288.2 L891.1 285.5 L891.9 290.4 L892.7 285.7 L893.6 293.4 L894.4 290.5 L895.2 294.6 L896.0 293.7 L896.8 299.0 L897.7 296.2 L898.5 300.3 L899.3 300.7 L900.1 293.4 L900.9 293.1 L901.8 281.6 L902.6 280.6 L903.4 272.5 L904.2 271.5 L905.0 260.6 L905.9 260.1 L906.7 251.1 L907.5 246.7 L908.4 251.5 L909.2 251.8 L910.1 260.1 L911.0 262.0 L911.9 255.1 L912.9 253.5 L913.8 244.4 L914.6 251.4 L915.4 266.1 L916.2 272.6 L917.0 266.7 L917.7 265.9 L918.5 257.1 L919.2 256.2 L920.0 246.4 L920.8 245.2 L921.5 236.4 L922.3 233.8 L923.2 242.9 L924.2 244.0 L925.1 251.4 L926.0 248.4 L926.9 241.0 L927.7 240.5 L928.6 235.0 L929.4 237.8 L930.1 244.0 L930.9 246.7 L931.7 239.2 L932.5 234.9 L933.3 225.4 L934.1 222.1 L934.9 213.9 L935.7 216.6 L936.5 226.4 L937.2 228.2 L938.0 237.0 L938.8 239.5 L939.6 246.7 L940.4 243.1 L941.2 236.4 L941.9 234.3 L942.7 229.1 L943.5 223.0 L944.3 224.6 L945.1 217.7 L945.9 217.7 L946.6 209.1 L947.4 210.0 L948.2 202.6 L949.0 202.2 L949.8 206.5 L950.5 204.8 L951.3 212.2 L952.1 209.7 L952.9 216.0 L953.6 213.7 L954.4 218.6 L955.2 219.6 L956.0 212.2 L956.8 214.5 L957.5 206.6 L958.3 209.3 L959.1 204.5 L959.9 212.6 L960.7 224.5 L961.6 219.2 L962.5 209.5 L963.4 204.5 L964.3 196.3 L965.0 201.2 L965.8 210.8 L966.5 212.5 L967.3 219.8 L968.1 217.1 L968.9 211.0 L969.6 211.1 L970.4 201.1 L971.2 202.8 L972.0 194.8 L972.7 193.9 L973.5 186.9 L974.3 184.6 L975.1 188.4 L976.0 187.1 L976.8 192.1 L977.7 190.5 L978.5 197.1 L979.4 192.3 L980.2 197.5 L981.0 193.1 L981.8 182.9 L982.6 181.1 L983.4 169.6 L984.2 164.6 L985.0 171.0 L985.8 173.2 L986.5 180.5 L987.3 181.4 L988.1 190.2 L988.9 192.8 L989.6 187.4 L990.4 186.7 L991.1 179.7 L991.9 176.4 L992.7 185.3 L993.5 190.2 L994.3 198.7 L995.1 195.8 L995.9 188.4 L996.6 185.5 L997.4 178.3 L998.2 176.6 L999.0 170.5 L999.8 170.0 L1000.6 176.4 L1001.4 173.3 L1002.2 180.4 L1003.0 179.7 L1003.9 171.1 L1004.7 170.8 L1005.5 160.0 L1006.4 155.8 L1007.4 167.4 L1008.4 175.7 L1009.2 169.4 L1010.0 169.8 L1010.8 174.4 L1011.6 173.9 L1012.3 182.4 L1013.1 182.4 L1013.9 186.7 L1014.6 193.4 L1015.4 191.1 L1016.1 200.4 L1016.9 201.7 L1017.9 193.5 L1018.9 190.7 L1019.9 198.6 L1020.9 200.7 L1021.9 196.5 L1022.9 194.7 L1023.9 203.3 L1024.9 207.6 L1025.7 214.5 L1026.4 228.5 L1027.2 231.6 L1027.9 243.5 L1028.7 242.5 L1029.4 233.2 L1030.2 234.7 L1030.9 227.6 L1031.7 229.0 L1032.5 238.2 L1033.3 238.1 L1034.1 244.4 L1034.9 247.5 L1035.7 248.7 L1036.4 253.9 L1037.2 253.4 L1037.9 259.7 L1038.7 256.8 L1039.4 261.4 L1040.2 258.9 L1041.1 249.0 L1042.0 249.0 L1042.8 241.5 L1043.6 235.4 L1044.5 234.3 L1045.3 226.7 L1046.1 228.3 L1047.0 219.5 L1047.8 217.6 L1048.5 223.3 L1049.3 222.0 L1050.0 229.0 L1050.8 231.5 L1051.8 221.3 L1052.8 216.6 L1053.5 221.8 L1054.3 223.1 L1055.0 229.3 L1055.8 231.5 L1056.6 233.2 L1057.4 241.7 L1058.2 242.0 L1059.0 252.5 L1059.8 251.5 L1060.6 259.8 L1061.4 262.4 L1062.3 258.2 L1063.1 260.6 L1064.0 253.1 L1064.8 256.1 L1065.7 251.5 L1066.5 249.6 L1067.3 253.7 L1068.1 252.1 L1068.9 255.4 L1069.7 254.5 L1070.6 248.8 L1071.5 250.1 L1072.3 243.2 L1073.2 243.3 L1074.1 239.5 L1075.0 237.5 L1075.8 239.0 L1076.7 236.5 L1077.5 238.7 L1078.2 248.5 L1079.0 248.1 L1079.7 255.4 L1080.5 251.5 L1081.2 242.3 L1082.0 241.0 L1082.7 233.5 L1083.5 228.3 L1084.2 228.2 L1085.0 220.7 L1085.7 220.6 L1086.5 223.7 L1087.2 220.8 L1088.0 229.1 L1088.7 227.6 L1089.5 222.4 L1090.3 220.8 L1091.0 211.5 L1091.8 213.3 L1092.6 205.6 L1093.4 201.3 L1094.2 202.3 L1095.0 197.1 L1095.8 199.3 L1096.6 193.7 L1097.4 189.0 L1098.3 189.4 L1099.1 182.6 L1099.9 182.6 L1100.8 173.8 L1101.6 173.8 L1102.3 176.4 L1103.1 173.8 L1103.8 180.3 L1104.6 179.7 L1105.3 173.9 L1106.1 176.9 L1106.8 170.1 L1107.6 168.8 L1108.4 172.9 L1109.2 168.7 L1110.0 172.7 L1110.8 172.0 L1111.6 173.8 L1112.4 180.2 L1113.3 180.5 L1114.1 188.3 L1114.9 189.9 L1115.8 197.1 L1116.6 199.7 L1117.6 194.1 L1118.5 194.7 L1119.5 187.7 L1120.5 190.9 L1121.5 195.7 L1122.3 196.9 L1123.1 189.5 L1123.9 192.0 L1124.7 186.1 L1125.5 190.4 L1126.3 183.0 L1127.1 186.1 L1127.9 181.1 L1128.7 183.1 L1129.5 179.7 L1130.5 189.7 L1131.2 180.8 L1132.0 181.1 L1132.8 171.5 L1133.5 167.8 L1134.3 167.7 L1135.2 162.3 L1136.0 162.7 L1136.8 158.7 L1137.7 160.8 L1138.5 155.8 L1139.3 158.1 L1140.2 166.7 L1141.0 165.9 L1141.9 172.7 L1142.7 172.9 L1143.6 180.2 L1144.4 182.7 L1145.2 179.2 L1145.9 182.5 L1146.7 174.4 L1147.4 175.7 L1148.2 176.8 L1149.0 169.7 L1149.8 173.5 L1150.6 165.3 L1151.4 166.8 L1152.2 173.8 L1152.9 173.6 L1153.7 181.9 L1154.4 185.7 L1155.3 175.0 L1156.2 171.7 L1157.1 159.0 L1158.0 153.8 L1158.8 158.5 L1159.5 156.8 L1160.2 161.5 L1161.0 162.8 L1162.0 155.6 L1163.0 154.8 L1164.0 143.5 L1165.0 129.9 L1166.0 130.9 L1166.9 135.9 L1167.8 133.3 L1168.6 125.7 L1169.5 123.0 L1170.3 127.4 L1171.2 123.1 L1172.1 129.7 L1172.9 129.9 L1173.9 122.9 L1174.9 121.0 L1175.8 129.8 L1176.6 133.2 L1177.5 144.5 L1178.3 149.9 L1179.2 152.3 L1180.0 158.4 L1180.9 160.8 L1181.8 153.7 L1182.6 152.5 L1183.5 141.5 L1184.3 137.9 L1185.1 144.7 L1185.9 145.6 L1186.7 157.5 L1187.5 157.6 L1188.3 166.1 L1189.1 169.1 L1189.9 175.8 L1190.9 183.1 L1191.8 186.7 L1192.8 194.7 L1193.5 193.2 L1194.3 188.3 L1195.0 188.7 L1195.8 184.7 L1196.6 181.8 L1197.5 186.5 L1198.3 180.0 L1199.1 183.9 L1200.0 179.5 L1200.8 180.7 L1201.5 186.0 L1202.3 185.2 L1203.0 191.8 L1203.8 192.2 L1204.5 197.8 L1205.3 196.1 L1206.0 203.7 L1206.8 205.7 L1207.6 198.3 L1208.5 197.5 L1209.3 186.7 L1210.1 185.8 L1211.0 177.6 L1211.8 173.8 L1212.6 179.2 L1213.4 181.7 L1214.2 175.4 L1215.1 174.7 L1216.0 165.0 L1216.8 163.8 L1217.8 168.8 L1218.8 167.8 L1219.6 169.1 L1220.4 177.4 L1221.1 180.1 L1221.9 188.0 L1222.7 189.7 L1223.5 185.4 L1224.3 189.3 L1225.1 183.8 L1225.9 185.7 L1226.7 183.7 L1227.5 182.6 L1228.2 188.4 L1229.0 183.0 L1229.7 186.7 L1230.5 192.5 L1231.2 188.8 L1232.0 196.4 L1232.7 196.6 L1233.5 201.6 L1234.2 201.0 L1235.0 208.4 L1235.7 208.6 L1237.1 195.7 L1238.0 196.9 L1238.9 207.3 L1239.8 206.6 L1240.7 213.6 L1241.5 215.4 L1242.4 209.6 L1243.2 212.8 L1244.0 208.7 L1244.9 211.4 L1245.7 207.6 L1246.5 206.2 L1247.3 210.8 L1248.2 205.1 L1249.0 209.2 L1249.8 206.5 L1250.6 207.6 L1251.4 213.5 L1252.2 213.9 L1253.0 223.4 L1253.8 224.1 L1254.6 229.6 L1255.4 228.0 L1256.2 222.2 L1257.0 224.1 L1257.8 217.4 L1258.6 216.6 L1259.3 220.1 L1260.1 218.5 L1260.8 223.8 L1261.6 223.5 L1262.3 229.2 L1263.1 226.1 L1263.8 234.0 L1264.6 233.6 L1265.4 228.2 L1266.3 231.0 L1267.1 225.2 L1267.9 225.7 L1268.8 218.6 L1269.6 219.6 L1270.3 220.7 L1271.1 215.0 L1271.8 216.0 L1272.6 213.6 L1273.4 220.0 L1274.2 233.1 L1275.1 237.1 L1275.9 247.5 L1276.8 243.7 L1277.6 234.4 L1278.5 231.6 L1279.5 240.8 L1280.5 243.5 L1281.2 237.9 L1282.0 235.9 L1282.8 229.1 L1283.5 226.6 L1284.3 229.0 L1285.2 225.0 L1286.0 229.4 L1286.8 225.7 L1287.7 231.8 L1288.5 229.6 L1289.3 232.0 L1290.0 240.0 L1290.8 239.9 L1291.6 249.4 L1292.4 249.5 L1293.1 258.3 L1293.9 261.5 L1294.7 257.0 L1295.5 258.0 L1296.3 250.5 L1297.1 252.2 L1297.9 243.7 L1298.7 243.9 L1299.5 239.5 L1300.3 242.7 L1301.1 250.5 L1301.8 250.7 L1302.6 261.1 L1303.4 262.4 L1304.2 256.2 L1305.0 254.3 L1305.8 246.1 L1306.6 245.8 L1307.4 237.5 L1308.2 240.0 L1309.0 245.8 L1309.8 247.6 L1310.6 254.1 L1311.4 252.9 L1312.2 262.8 L1313.0 263.4" fill="none" stroke="#4358a8" stroke-width="1.15" stroke-linejoin="round"/><path d="M545.0 523.0 L545.9 549.6 L547.1 466.1 L548.1 555.5 L549.3 457.9 L549.9 565.1 L551.0 466.9 L551.8 493.9 L553.4 441.9 L554.0 564.3 L555.4 498.4 L556.9 555.9 L557.7 452.6 L559.1 561.5 L560.6 463.4 L561.7 542.1 L562.9 483.3 L564.5 583.0 L565.3 452.2 L566.2 532.9 L566.9 421.0 L568.3 560.7 L569.5 446.6 L570.2 557.1 L571.4 455.7 L572.2 560.6 L573.4 471.4 L574.9 544.2 L575.8 452.2 L576.4 524.8 L577.2 450.3 L577.9 553.9 L579.3 442.4 L580.2 493.3 L581.1 465.3 L582.3 545.0 L583.6 501.1 L584.4 557.0 L585.1 443.7 L586.0 554.8 L587.3 445.7 L588.3 549.4 L589.5 495.8 L590.8 531.3 L592.0 456.3 L592.9 559.9 L593.8 476.5 L595.3 558.4 L596.8 476.3 L597.6 550.5 L598.6 443.5 L600.0 535.3 L601.4 475.1 L602.1 561.7 L603.1 504.3 L604.5 548.6 L605.1 469.9 L605.9 555.7 L607.5 460.5 L608.2 554.5 L609.5 456.0 L610.8 540.3 L612.0 446.1 L613.1 529.8 L614.5 457.9 L615.8 528.5 L616.4 459.4 L617.1 480.1 L618.7 470.1 L620.2 547.4 L620.9 438.0 L621.8 560.0 L622.9 462.3 L624.5 564.0 L625.7 442.9 L626.4 559.7 L627.1 464.4 L628.4 555.4 L629.3 462.5 L630.1 549.6 L631.4 451.5 L632.9 475.3 L634.4 443.3 L635.4 558.6 L636.1 462.0 L637.2 541.4 L638.8 456.9 L640.0 561.3 L641.2 529.9 L642.7 558.8 L643.9 476.7 L644.7 555.4 L645.4 445.8 L646.6 528.4 L647.9 446.0 L648.7 556.7 L649.6 463.7 L650.8 611.4 L652.2 445.5 L653.8 553.8 L655.0 442.1 L656.5 540.7 L657.8 447.2 L658.7 547.7 L659.7 470.4 L660.9 559.9 L662.2 446.8 L662.8 540.8 L664.3 456.8 L665.5 488.2 L666.7 454.5 L667.7 539.5 L668.7 448.3 L670.2 561.2 L671.2 479.7 L672.1 565.0 L673.2 453.5 L674.4 563.1 L675.1 515.9 L676.4 560.3 L677.1 472.7 L677.7 548.5 L678.9 450.1 L680.5 547.5 L681.1 468.5 L682.4 514.6 L683.6 430.5 L684.4 545.8 L686.0 474.4 L687.5 561.1 L689.0 445.5 L689.7 549.9 L690.3 442.4 L691.4 518.4 L692.8 477.5 L693.7 564.2 L694.5 401.3 L695.2 606.3 L696.4 451.7 L697.0 540.1 L697.7 448.4 L698.9 564.2 L700.2 452.8 L701.2 528.8 L702.5 465.7 L703.2 558.1 L704.6 456.0 L706.0 552.2 L706.8 467.8 L708.2 560.0 L709.2 460.7 L710.5 558.1 L711.9 432.0 L712.9 547.5 L714.4 447.7 L715.4 502.0 L716.6 458.1 L718.2 530.3 L719.6 445.4 L720.4 539.2 L721.8 530.3 L723.4 545.6 L724.3 510.0 L725.1 512.3 L725.8 496.5 L726.5 548.1 L727.8 449.7 L729.3 551.0 L730.5 457.8 L731.5 527.9 L733.1 453.9 L734.1 485.6 L734.8 456.3 L735.9 557.7 L736.8 477.2 L737.8 605.0 L738.8 479.3 L739.8 548.3 L740.7 456.1 L742.0 564.2 L742.9 479.6 L744.0 555.0 L745.4 399.6 L746.1 532.1 L746.9 442.7 L747.5 547.8 L749.0 455.9 L749.8 520.5 L750.9 447.3 L751.6 545.9 L753.0 458.2 L754.4 558.8 L755.7 525.0 L756.7 592.0 L757.9 419.0 L758.8 549.0 L760.2 475.0 L761.1 558.6 L762.5 442.1 L763.8 539.8 L765.0 514.2 L766.6 557.7 L768.0 459.2 L769.5 561.2 L770.9 422.0 L772.1 589.0 L773.5 446.7 L774.8 564.8 L775.5 452.8 L776.7 481.5 L777.4 447.8 L778.5 565.0 L779.7 458.1 L780.8 591.0 L781.9 469.1 L783.5 546.1 L784.9 428.0 L786.2 560.2 L787.3 445.5 L788.8 561.3 L789.4 457.5 L790.3 534.2 L791.6 395.5 L792.7 530.9 L794.2 452.8 L794.9 547.9 L796.3 459.0 L797.5 555.3 L798.8 467.5 L800.2 562.8 L801.0 397.5 L801.8 563.4 L803.4 457.8 L804.9 607.5 L806.2 441.8 L807.6 563.9 L809.2 455.9 L810.3 493.9 L811.2 479.5 L812.0 537.7 L813.5 463.4 L815.1 526.8 L815.8 464.9 L817.3 520.9 L818.0 457.8 L819.5 537.8 L820.5 448.6 L821.7 564.1 L822.5 473.4 L823.6 558.9 L824.9 449.1 L826.1 550.6 L827.6 444.5 L828.9 535.0 L829.9 459.6 L830.9 562.0 L832.4 481.0 L833.7 480.4 L834.4 497.3 L835.3 537.3 L836.3 451.1 L837.0 548.2 L837.6 525.4 L838.4 506.3 L839.8 443.2 L841.3 526.4 L841.9 444.2 L843.3 556.6 L843.9 487.8 L844.8 558.7 L845.8 453.2 L847.2 562.3 L847.9 518.2 L848.6 514.7 L849.4 449.4 L850.7 496.5 L852.2 454.3 L853.3 561.8 L854.0 443.2 L855.0 547.5 L856.5 445.6 L857.8 563.9 L859.4 470.6 L860.8 545.2 L861.7 467.5 L863.0 561.0 L863.9 470.8 L865.3 529.0 L866.2 460.4 L867.4 541.3 L868.8 446.7 L869.7 556.1 L871.1 455.0 L872.0 559.2 L872.6 448.7 L873.7 540.8 L874.5 444.8 L875.4 547.2 L876.5 442.0 L878.0 535.2 L879.5 445.5 L881.0 565.1 L882.1 458.3 L883.3 474.5 L884.6 460.1 L885.5 552.6 L886.6 468.0 L887.8 555.0 L888.9 515.2 L890.1 498.3 L891.1 522.4 L891.8 557.5 L892.8 444.9 L893.9 545.8 L895.0 511.5 L896.3 534.6 L897.8 445.9 L898.9 563.8 L900.2 512.4 L901.8 539.8 L903.3 461.3 L904.6 561.2 L905.8 473.7 L906.7 555.5 L908.3 451.8 L909.4 555.3 L910.2 532.6 L910.8 554.9 L911.7 456.3 L912.6 547.4 L914.1 463.7 L914.8 563.8 L916.2 466.8 L917.5 554.6 L918.3 443.5 L919.5 556.1 L920.1 466.0 L920.8 556.3 L922.0 456.2 L922.9 538.7 L924.3 525.6 L925.7 560.5 L926.7 442.5 L928.1 564.3 L929.2 473.4 L930.3 528.5 L931.7 449.9 L933.1 542.1 L933.7 444.2 L935.3 532.7 L936.0 444.3 L937.1 555.5 L938.1 466.9 L938.8 557.3 L939.8 458.2 L941.3 565.1 L942.0 466.1 L943.0 540.1 L943.8 451.6 L944.5 549.7 L945.7 480.0 L946.7 557.5 L947.6 445.4 L948.8 539.2 L950.0 447.2 L951.2 550.1 L952.7 442.5 L953.5 542.5 L955.1 462.4 L956.2 551.2 L957.2 450.9 L958.6 564.8 L959.3 464.1 L960.7 543.9 L962.2 455.7 L963.7 522.9 L965.3 460.0 L966.1 543.6 L967.1 459.6 L968.6 565.4 L969.5 461.1 L971.0 493.5 L972.4 444.7 L973.5 521.9 L974.4 465.7 L975.1 563.8 L976.2 464.2 L977.1 564.3 L978.4 451.5 L979.1 549.3 L980.5 459.3 L981.2 523.3 L982.0 445.7 L983.1 555.0 L983.9 495.6 L985.4 543.8 L986.4 452.9 L987.0 548.2 L988.2 454.7 L989.5 540.1 L990.6 472.3 L991.6 527.2 L992.4 469.4 L993.5 550.3 L995.0 457.5 L996.5 545.8 L997.6 457.7 L999.0 562.9 L999.8 446.4 L1000.7 552.0 L1001.8 489.4 L1002.5 547.1 L1003.4 442.9 L1004.3 563.6 L1004.9 490.0 L1006.5 554.6 L1007.5 458.7 L1008.4 560.7 L1009.8 453.9 L1011.3 535.1 L1012.0 458.0 L1013.2 517.7 L1014.5 444.7 L1015.8 561.9 L1016.9 452.0 L1017.9 553.2 L1018.6 466.9 L1020.0 487.5 L1021.5 455.0 L1022.6 538.2 L1023.3 448.1 L1024.7 561.6 L1025.4 463.0 L1026.7 555.8 L1027.8 527.7 L1028.5 524.8 L1029.4 513.5 L1031.0 547.2 L1031.8 475.6 L1032.6 481.5 L1033.5 452.8 L1034.3 537.9 L1034.9 504.7 L1035.9 508.4 L1037.2 465.2 L1037.8 552.7 L1038.6 454.3 L1039.5 489.9 L1040.9 444.2 L1041.9 548.3 L1042.8 444.8 L1044.3 555.7 L1045.4 463.6 L1046.4 544.2 L1047.9 442.2 L1049.0 546.1 L1049.9 442.3 L1051.3 554.3 L1052.7 443.8 L1054.2 556.5 L1055.4 451.9 L1056.5 562.3 L1058.0 447.3 L1059.3 481.4 L1060.3 442.5 L1061.5 551.9 L1062.8 524.5 L1064.1 532.6 L1065.1 449.1 L1066.4 532.5 L1067.6 456.4 L1068.9 511.8 L1070.0 444.2 L1071.4 562.3 L1072.3 450.2 L1073.3 554.6 L1074.1 460.5 L1075.5 537.2 L1076.9 450.3 L1078.1 552.8 L1079.3 449.0 L1080.1 548.0 L1081.4 459.6 L1082.0 524.2 L1082.8 457.3 L1084.1 483.8 L1085.2 490.7 L1086.1 559.6 L1086.7 497.5 L1087.7 518.0 L1089.0 446.0 L1090.5 547.1 L1091.8 462.9 L1093.3 556.2 L1094.2 444.7 L1095.1 555.5 L1096.1 445.0 L1097.3 563.1 L1098.2 441.9 L1099.0 562.5 L1099.9 445.5 L1100.9 554.6 L1102.1 469.6 L1103.0 564.7 L1104.0 446.5 L1104.7 558.5 L1105.9 460.8 L1106.5 553.4 L1107.7 456.3 L1108.3 552.7 L1109.1 444.7 L1110.0 554.6 L1110.7 479.4 L1112.1 560.9 L1112.7 488.1 L1114.2 555.8 L1115.6 443.2 L1117.1 534.7 L1118.4 444.7 L1119.6 546.7 L1120.8 441.7 L1121.6 561.1 L1122.3 442.3 L1123.1 542.9 L1124.6 515.5 L1125.5 551.8 L1126.4 460.2 L1127.8 562.0 L1129.4 446.7 L1130.3 559.1 L1131.4 447.6 L1132.5 554.5 L1133.6 462.5 L1134.7 538.3 L1135.7 519.2 L1136.9 503.8 L1138.0 510.3 L1139.0 565.2 L1140.0 449.0 L1140.8 536.3 L1142.1 468.7 L1143.4 484.8 L1144.8 462.0 L1145.5 557.3 L1146.8 465.5 L1147.6 548.0 L1149.1 464.9 L1150.5 535.6 L1152.0 450.0 L1153.1 560.8 L1154.2 454.7 L1155.5 553.8 L1156.8 442.1 L1157.9 522.9 L1159.2 449.8 L1160.6 551.7 L1161.4 451.7 L1162.6 542.6 L1163.2 455.7 L1164.2 558.2 L1165.3 464.1 L1166.1 543.8 L1167.3 452.9 L1168.5 559.0 L1169.2 444.2 L1170.4 553.4 L1171.3 466.7 L1172.6 564.2 L1174.0 453.2 L1174.8 547.1 L1175.8 451.5 L1176.6 510.6 L1178.2 462.4 L1179.2 553.5 L1180.7 450.9 L1182.2 552.0 L1183.3 449.0 L1184.6 515.4 L1186.1 443.3 L1186.7 565.0 L1188.2 480.5 L1189.0 563.5 L1189.7 450.9 L1190.8 516.9 L1191.4 500.8 L1192.6 544.9 L1193.5 444.3 L1194.7 552.3 L1195.4 501.6 L1196.4 546.8 L1197.5 443.9 L1198.4 556.3 L1199.8 482.1 L1201.1 545.6 L1201.8 451.0 L1202.4 528.1 L1203.6 503.9 L1204.5 556.7 L1205.2 462.0 L1206.4 541.2 L1207.4 466.5 L1208.5 557.9 L1209.4 441.7 L1210.7 550.5 L1211.9 474.9 L1212.9 547.8 L1214.4 459.9 L1215.5 548.3 L1216.6 469.0 L1217.8 560.2 L1218.6 447.0 L1220.1 559.5 L1221.0 490.5 L1222.0 489.9 L1223.2 481.6 L1224.5 552.7 L1225.4 447.7 L1226.6 490.4 L1227.6 498.2 L1229.1 536.5 L1229.8 452.1 L1231.1 546.5 L1232.6 466.1 L1233.3 541.6 L1234.4 459.5 L1235.1 480.8 L1236.3 451.7 L1236.9 515.4 L1238.0 494.6 L1238.6 564.2 L1239.5 466.1 L1240.5 538.8 L1241.5 519.5 L1242.9 533.9 L1244.3 446.7 L1245.3 557.7 L1246.4 467.7 L1247.5 548.8 L1249.0 453.0 L1250.1 559.9 L1251.5 449.0 L1252.7 534.6 L1254.2 448.8 L1254.9 552.4 L1256.5 471.1 L1257.3 545.3 L1258.3 443.1 L1259.6 563.6 L1260.3 455.6 L1261.6 563.5 L1262.7 443.5 L1263.3 551.4 L1263.9 456.6 L1265.2 562.5 L1266.1 509.2 L1266.8 523.7 L1267.7 442.9 L1269.1 543.0 L1270.3 456.4 L1271.5 562.2 L1272.9 511.4 L1274.5 543.5 L1275.2 470.7 L1276.0 563.2 L1277.5 452.4 L1278.8 550.8 L1279.4 451.9 L1280.3 541.8 L1281.8 441.6 L1282.7 548.2 L1283.6 450.6 L1284.4 564.0 L1286.0 447.9 L1287.2 563.3 L1287.9 498.8 L1289.2 550.3 L1289.9 463.9 L1290.8 559.3 L1291.7 444.9 L1293.1 559.0 L1294.5 446.0 L1296.0 533.0 L1297.6 474.2 L1299.0 558.8 L1300.5 449.8 L1301.5 550.8 L1302.4 449.1 L1303.4 563.3 L1304.3 472.4 L1305.5 556.0 L1306.8 459.2 L1307.5 559.2 L1308.3 443.6 L1309.7 533.7 L1310.9 447.9 L1311.7 554.9 L1312.6 456.2" fill="none" stroke="#0a8f48" stroke-width="1.15"/></g></svg>
<div style="position:absolute;left:545px;top:632px;width:768px;height:1.2px;background:#ccd6eb;"></div>
<div style="position:absolute;left:576.0px;top:632px;width:1px;height:5px;background:#ccd6eb;"></div>
<div style="position:absolute;left:554.70px;top:642.46px;font-size:12.1px;line-height:12.1px;color:#666;font-weight:normal;letter-spacing:-0.020px;white-space:nowrap;">8:00 pm</div>
<div style="position:absolute;left:692.7px;top:632px;width:1px;height:5px;background:#ccd6eb;"></div>
<div style="position:absolute;left:668.29px;top:642.46px;font-size:12.1px;line-height:12.1px;color:#666;font-weight:normal;letter-spacing:-0.089px;white-space:nowrap;">10:00 pm</div>
<div style="position:absolute;left:809.4px;top:632px;width:1px;height:5px;background:#ccd6eb;"></div>
<div style="position:absolute;left:791.21px;top:642.46px;font-size:12.1px;line-height:12.1px;color:#666;font-weight:normal;letter-spacing:-0.060px;white-space:nowrap;">Feb 20</div>
<div style="position:absolute;left:926.0px;top:632px;width:1px;height:5px;background:#ccd6eb;"></div>
<div style="position:absolute;left:904.70px;top:642.46px;font-size:12.1px;line-height:12.1px;color:#666;font-weight:normal;letter-spacing:-0.020px;white-space:nowrap;">2:00 am</div>
<div style="position:absolute;left:1042.6px;top:632px;width:1px;height:5px;background:#ccd6eb;"></div>
<div style="position:absolute;left:1021.30px;top:642.46px;font-size:12.1px;line-height:12.1px;color:#666;font-weight:normal;letter-spacing:-0.020px;white-space:nowrap;">4:00 am</div>
<div style="position:absolute;left:1158.8px;top:632px;width:1px;height:5px;background:#ccd6eb;"></div>
<div style="position:absolute;left:1137.50px;top:642.46px;font-size:12.1px;line-height:12.1px;color:#666;font-weight:normal;letter-spacing:-0.020px;white-space:nowrap;">6:00 am</div>
<div style="position:absolute;left:1275.0px;top:632px;width:1px;height:5px;background:#ccd6eb;"></div>
<div style="position:absolute;left:1253.70px;top:642.46px;font-size:12.1px;line-height:12.1px;color:#666;font-weight:normal;letter-spacing:-0.020px;white-space:nowrap;">8:00 am</div>
<svg style="position:absolute;left:509px;top:662px;" width="12" height="14" viewBox="0 0 12 14"><path d="M5.5 0 V10" stroke="#007960" stroke-width="2.6"/><path d="M0.5 7 L5.5 13 L10.5 7Z" fill="#007960"/></svg>
<div style="position:absolute;left:527.80px;top:663.73px;font-size:11.3px;line-height:11.3px;color:#007960;font-weight:normal;letter-spacing:-0.280px;white-space:nowrap;">2/19/2021 7:27 PM <span style="text-decoration:underline">PST</span></div>
<svg style="position:absolute;left:1109px;top:662px;" width="186" height="15" viewBox="0 0 186 15"><path d="M0.5 7 L7.5 0.5 V13.5Z M7 7 L14 0.5 V13.5Z" fill="#007960"/><path d="M30 7 L38 0.5 V13.5Z" fill="#007960"/><path d="M94.5 0.5 L102 7 L94.5 13.5Z" fill="#007960"/><path d="M117 0.5 L124 7 L117 13.5Z M123.5 0.5 L131 7 L123.5 13.5Z" fill="#007960"/><path d="M146.5 0.5 L153 7 L146.5 13.5Z" fill="#007960"/><rect x="153.5" y="0.5" width="2.5" height="14" fill="#007960"/><path d="M174 5.5 A5 5 0 0 1 182.5 4" fill="none" stroke="#007960" stroke-width="2"/><path d="M183 1 V6 H178Z" fill="#007960"/><path d="M182.5 8.5 A5 5 0 0 1 174 10" fill="none" stroke="#007960" stroke-width="2"/><path d="M173.5 13 V8 H178.5Z" fill="#007960"/></svg>
<div style="position:absolute;left:1162.20px;top:663.73px;font-size:11.3px;line-height:11.3px;color:#007960;font-weight:normal;letter-spacing:-0.335px;white-space:nowrap;">1 day</div>
<div style="position:absolute;left:501px;top:682px;width:812px;height:67px;background:#f5f5f5;"></div>
<div style="position:absolute;left:501px;top:682px;width:812px;height:1px;background:#ebebeb;"></div>
<div style="position:absolute;left:527px;top:691px;width:800px;height:14px;background:transparent;border:2px solid #c9c9c9;border-radius:3px;box-sizing:border-box;"></div>
<div style="position:absolute;left:563.8px;top:705px;width:1px;height:3.5px;background:#d0d0d0;"></div>
<div style="position:absolute;left:549.70px;top:709.76px;font-size:9.5px;line-height:9.5px;color:#777;font-weight:normal;letter-spacing:-0.076px;white-space:nowrap;">Feb 14</div>
<div style="position:absolute;left:663.1px;top:705px;width:1px;height:3.5px;background:#d0d0d0;"></div>
<div style="position:absolute;left:644.13px;top:709.76px;font-size:9.5px;line-height:9.5px;color:#777;font-weight:normal;letter-spacing:-0.097px;white-space:nowrap;">12:00 pm</div>
<div style="position:absolute;left:762.5px;top:705px;width:1px;height:3.5px;background:#d0d0d0;"></div>
<div style="position:absolute;left:748.40px;top:709.76px;font-size:9.5px;line-height:9.5px;color:#777;font-weight:normal;letter-spacing:-0.076px;white-space:nowrap;">Feb 15</div>
<div style="position:absolute;left:861.8px;top:705px;width:1px;height:3.5px;background:#d0d0d0;"></div>
<div style="position:absolute;left:842.83px;top:709.76px;font-size:9.5px;line-height:9.5px;color:#777;font-weight:normal;letter-spacing:-0.097px;white-space:nowrap;">12:00 pm</div>
<div style="position:absolute;left:961.1px;top:705px;width:1px;height:3.5px;background:#d0d0d0;"></div>
<div style="position:absolute;left:947.00px;top:709.76px;font-size:9.5px;line-height:9.5px;color:#777;font-weight:normal;letter-spacing:-0.076px;white-space:nowrap;">Feb 16</div>
<div style="position:absolute;left:1060.5px;top:705px;width:1px;height:3.5px;background:#d0d0d0;"></div>
<div style="position:absolute;left:1041.53px;top:709.76px;font-size:9.5px;line-height:9.5px;color:#777;font-weight:normal;letter-spacing:-0.097px;white-space:nowrap;">12:00 pm</div>
<div style="position:absolute;left:1159.9px;top:705px;width:1px;height:3.5px;background:#d0d0d0;"></div>
<div style="position:absolute;left:1145.80px;top:709.76px;font-size:9.5px;line-height:9.5px;color:#777;font-weight:normal;letter-spacing:-0.076px;white-space:nowrap;">Feb 17</div>
<div style="position:absolute;left:1259.2px;top:705px;width:1px;height:3.5px;background:#d0d0d0;"></div>
<div style="position:absolute;left:1240.23px;top:709.76px;font-size:9.5px;line-height:9.5px;color:#777;font-weight:normal;letter-spacing:-0.097px;white-space:nowrap;">12:00 pm</div>
<svg style="position:absolute;left:509px;top:728px;" width="11" height="15" viewBox="0 0 11 15"><path d="M5.5 14.5 V4" stroke="#007960" stroke-width="2.6"/><path d="M0.3 6 L5.5 0.3 L10.7 6Z" fill="#007960"/></svg>
<div style="position:absolute;left:528.20px;top:732.68px;font-size:11.6px;line-height:11.6px;color:#007960;font-weight:normal;letter-spacing:-0.226px;white-space:nowrap;">2/13/2021</div>
<div style="position:absolute;left:1218.70px;top:732.83px;font-size:11.3px;line-height:11.3px;color:#007960;font-weight:normal;letter-spacing:-0.298px;white-space:nowrap;">7 days</div>
<div style="position:absolute;left:501px;top:749px;width:812px;height:26px;background:#007960;"></div>
<svg style="position:absolute;left:511px;top:756px;" width="17" height="11" viewBox="0 0 17 11"><path d="M0.7 0 V10.3 H16.5" fill="none" stroke="#fff" stroke-width="1.3"/><path d="M2.5 9.5 V5.5 L6 1.5 L9 5 L12 2.5 L15.5 6.5 V9.5Z" fill="#fff"/></svg>
<div style="position:absolute;left:529.70px;top:755.93px;font-size:12.6px;line-height:12.6px;color:#fff;font-weight:normal;letter-spacing:-0.202px;white-space:nowrap;-webkit-text-stroke:0.2px #fff;">Details</div>
<div style="position:absolute;left:501px;top:775px;width:812px;height:27px;background:#fff;"></div>
<div style="position:absolute;left:501px;top:801.5px;width:812px;height:1.5px;background:#dfe2e8;"></div>
<div style="position:absolute;left:501px;top:803px;width:812px;height:23px;background:#f9f9f9;"></div>
<div style="position:absolute;left:501px;top:825.5px;width:812px;height:1.5px;background:#dfe2e8;"></div>
<div style="position:absolute;left:501px;top:827px;width:812px;height:26px;background:#fff;"></div>
<svg style="position:absolute;left:579px;top:786px" width="10" height="10" viewBox="0 0 10 10"><path d="M1.2 1.2 L8.8 8.8 M8.8 1.2 L1.2 8.8" stroke="#555" stroke-width="2.4"/></svg>
<div style="position:absolute;left:599.5px;top:784.5px;width:11px;height:11px;border:1.3px solid #333;border-radius:2px;box-sizing:border-box;"></div>
<svg style="position:absolute;left:649px;top:785px;" width="8" height="11" viewBox="0 0 8 11"><path d="M0.3 4.5 L4 0.3 L7.7 4.5Z M0.3 6.3 L4 10.5 L7.7 6.3Z" fill="#555"/></svg>
<div style="position:absolute;left:675.50px;top:784.29px;font-size:12.3px;line-height:12.3px;color:#333;font-weight:normal;letter-spacing:-0.170px;white-space:nowrap;-webkit-text-stroke:0.35px #333;">Name</div>
<svg style="position:absolute;left:716px;top:785px;" width="8" height="11" viewBox="0 0 8 11"><path d="M0.3 4.5 L4 0.3 L7.7 4.5Z M0.3 6.3 L4 10.5 L7.7 6.3Z" fill="#555"/></svg>
<svg style="position:absolute;left:532px;top:809px" width="13" height="13" viewBox="0 0 13 13"><path d="M12.7 0.3 C8.6 0.3 5.2 2.4 3 6.1 L6.6 9.7 C10.3 7.5 12.7 4.3 12.7 0.3Z" fill="#007960"/><path d="M3.8 4.3 L0.8 5 L0.2 7.8 L3.2 7Z M8.4 9.3 L7.8 12.2 L5 12.8 L5.7 9.8Z" fill="#007960"/><path d="M2.7 8.4 Q0.7 9.2 0.3 12.3 Q3.4 11.9 4.2 9.9Z" fill="#007960"/><circle cx="9" cy="4" r="1.1" fill="#fff" fill-opacity="0.0"/></svg>
<svg style="position:absolute;left:557px;top:809px" width="12" height="12" viewBox="0 0 12 12"><circle cx="6" cy="6" r="6" fill="#007960"/><rect x="5" y="5" width="2.2" height="4" fill="#fff"/><rect x="4" y="8.6" width="4.2" height="1.3" fill="#fff"/><rect x="4" y="5" width="2" height="1.2" fill="#fff"/><circle cx="6.1" cy="3" r="1.2" fill="#fff"/></svg>
<svg style="position:absolute;left:579px;top:809.5px" width="10" height="10" viewBox="0 0 10 10"><path d="M1.2 1.2 L8.8 8.8 M8.8 1.2 L1.2 8.8" stroke="#007960" stroke-width="2.4"/></svg>
<div style="position:absolute;left:599.5px;top:809px;width:11px;height:11px;border:1.3px solid #333;border-radius:2px;box-sizing:border-box;"></div>
<svg style="position:absolute;left:622px;top:806px" width="16" height="14" viewBox="0 0 16 14"><path d="M1 8.5 L3.6 1.5 L7 10 L9 5.5 L12.4 13 L14.6 9.5" fill="none" stroke="#4055a3" stroke-width="1.7" stroke-linejoin="miter"/></svg>
<div style="position:absolute;left:644.40px;top:808.59px;font-size:12.3px;line-height:12.3px;color:#333;font-weight:normal;letter-spacing:-1.900px;white-space:nowrap;">°C</div>
<div style="position:absolute;left:675.50px;top:808.59px;font-size:12.3px;line-height:12.3px;color:#333;font-weight:normal;letter-spacing:-0.680px;white-space:nowrap;-webkit-text-stroke:0.2px #333;">CDT158</div>
<svg style="position:absolute;left:505px;top:832px" width="15" height="12" viewBox="0 0 15 12"><path d="M9 1 H1 V11 H11 V7" fill="none" stroke="#007960" stroke-width="1.1"/><path d="M4.5 8.5 L5 6.2 L11.8 0.5 L13.8 2.3 L7 8 Z" fill="none" stroke="#007960" stroke-width="1.1"/></svg>
<svg style="position:absolute;left:532px;top:832.7px" width="13" height="13" viewBox="0 0 13 13"><path d="M12.7 0.3 C8.6 0.3 5.2 2.4 3 6.1 L6.6 9.7 C10.3 7.5 12.7 4.3 12.7 0.3Z" fill="#007960"/><path d="M3.8 4.3 L0.8 5 L0.2 7.8 L3.2 7Z M8.4 9.3 L7.8 12.2 L5 12.8 L5.7 9.8Z" fill="#007960"/><path d="M2.7 8.4 Q0.7 9.2 0.3 12.3 Q3.4 11.9 4.2 9.9Z" fill="#007960"/><circle cx="9" cy="4" r="1.1" fill="#fff" fill-opacity="0.0"/></svg>
<svg style="position:absolute;left:557px;top:832.7px" width="12" height="12" viewBox="0 0 12 12"><circle cx="6" cy="6" r="6" fill="#007960"/><rect x="5" y="5" width="2.2" height="4" fill="#fff"/><rect x="4" y="8.6" width="4.2" height="1.3" fill="#fff"/><rect x="4" y="5" width="2" height="1.2" fill="#fff"/><circle cx="6.1" cy="3" r="1.2" fill="#fff"/></svg>
<svg style="position:absolute;left:579px;top:833.2px" width="10" height="10" viewBox="0 0 10 10"><path d="M1.2 1.2 L8.8 8.8 M8.8 1.2 L1.2 8.8" stroke="#007960" stroke-width="2.4"/></svg>
<div style="position:absolute;left:599.5px;top:832.7px;width:11px;height:11px;border:1.3px solid #333;border-radius:2px;box-sizing:border-box;"></div>
<svg style="position:absolute;left:622px;top:829.7px" width="16" height="14" viewBox="0 0 16 14"><path d="M1 8.5 L3.6 1.5 L7 10 L9 5.5 L12.4 13 L14.6 9.5" fill="none" stroke="#068c45" stroke-width="1.7" stroke-linejoin="miter"/></svg>
<div style="position:absolute;left:644.40px;top:832.29px;font-size:12.3px;line-height:12.3px;color:#333;font-weight:normal;letter-spacing:-0.220px;white-space:nowrap;">°C/h</div>
<div style="position:absolute;left:675.50px;top:832.29px;font-size:12.3px;line-height:12.3px;color:#333;font-weight:normal;letter-spacing:-0.025px;white-space:nowrap;-webkit-text-stroke:0.2px #333;">CDT158 Derivative</div>
</body></html>
